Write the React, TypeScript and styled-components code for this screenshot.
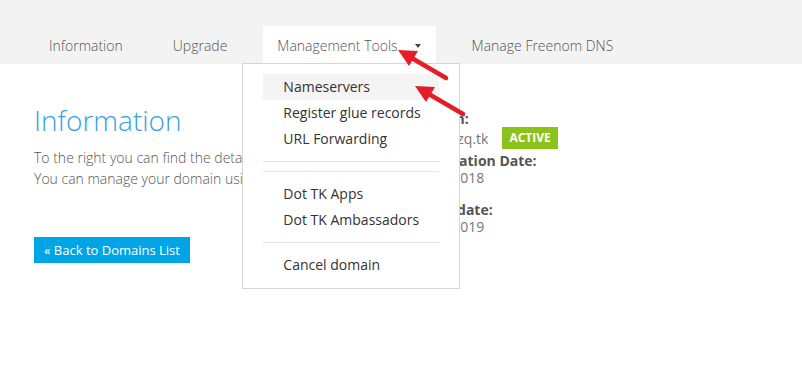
import React from "react";
import styled, { createGlobalStyle } from "styled-components";

const GlobalStyle = createGlobalStyle`
  body {
    margin: 0;
    padding: 0;
    background: #fff;
    font-family: "Open Sans", "Liberation Sans", sans-serif;
  }
`;

const Page = styled.div`
  position: relative;
  width: 802px;
  height: 374px;
  overflow: hidden;
`;

const NavBar = styled.div`
  height: 64px;
  background: #f3f3f3;
  display: flex;
  align-items: flex-end;
  gap: 22px;
  padding-left: 35px;
  box-sizing: border-box;
`;

const Tab = styled.div<{ $active?: boolean }>`
  position: relative;
  height: 38px;
  padding: 0 14px;
  display: flex;
  align-items: center;
  gap: 17px;
  font-size: 14px;
  font-weight: 300;
  color: #555;
  background: ${(p) => (p.$active ? "#fff" : "transparent")};
`;

const Caret = styled.span`
  width: 0;
  height: 0;
  border-left: 3.5px solid transparent;
  border-right: 3.5px solid transparent;
  border-top: 4px solid #444;
  margin: 2px 1px 0 0;
`;

const Dropdown = styled.div`
  position: absolute;
  top: 37px;
  left: -21px;
  width: 218px;
  box-sizing: border-box;
  background: #fff;
  border: 1px solid #d6d6d6;
  padding: 10px 20px;
  font-weight: 400;
  z-index: 2;
`;

const MenuItem = styled.div<{ $hover?: boolean }>`
  height: 26px;
  line-height: 26px;
  padding-left: 20px;
  font-size: 14px;
  color: #333;
  white-space: nowrap;
  background: ${(p) => (p.$hover ? "#f4f4f4" : "transparent")};
`;

const Divider = styled.div`
  height: 1px;
  margin: 9px 0;
  background: #e3e3e3;
`;

const Content = styled.div`
  display: grid;
  grid-template-columns: 376px 1fr;
  padding: 38px 0 0 34px;
`;

const Heading = styled.h1`
  margin: 0 0 9px;
  font-size: 28px;
  font-weight: 300;
  line-height: 36px;
  color: #3a9fdc;
`;

const Text = styled.p`
  margin: 0;
  font-size: 14px;
  line-height: 21px;
  font-weight: 300;
  color: #555;
  white-space: nowrap;
`;

const BackButton = styled.a`
  display: inline-block;
  margin-top: 48px;
  height: 26px;
  line-height: 26px;
  padding: 0 10px;
  background: #00a5e6;
  color: #fff;
  font-size: 13px;
  text-decoration: none;
`;

const Details = styled.div`
  padding-top: 8px;
`;

const Field = styled.div<{ $tight?: boolean }>`
  margin-bottom: ${(p) => (p.$tight ? "3px" : "15px")};
`;

const Label = styled.div`
  font-size: 14px;
  line-height: 17px;
  font-weight: 700;
  color: #555;
  white-space: nowrap;
`;

const Value = styled.div`
  display: flex;
  align-items: center;
  gap: 14px;
  min-height: 17px;
  font-size: 14px;
  line-height: 17px;
  color: #777;
  white-space: nowrap;
`;

const Badge = styled.span`
  height: 22px;
  line-height: 22px;
  padding: 0 7px;
  background: #8cc21c;
  color: #fff;
  font-size: 12px;
  font-weight: 700;
`;

const Arrows = styled.svg`
  position: absolute;
  left: 0;
  top: 0;
  pointer-events: none;
  z-index: 3;
`;

const Arrow = ({ dx, dy }: { dx: number; dy: number }) => (
  <g transform={`translate(${dx} ${dy})`}>
    <line x1="446" y1="78" x2="410" y2="57" stroke="#e41e26" strokeWidth="4.5" strokeLinecap="round" />
    <polygon points="398,50 418,51 409,66" fill="#e41e26" />
  </g>
);

export default function App() {
  return (
    <Page>
      <GlobalStyle />
      <NavBar>
        <Tab>Information</Tab>
        <Tab>Upgrade</Tab>
        <Tab $active>
          Management Tools
          <Caret />
          <Dropdown>
            <MenuItem $hover>Nameservers</MenuItem>
            <MenuItem>Register glue records</MenuItem>
            <MenuItem>URL Forwarding</MenuItem>
            <Divider />
            <Divider />
            <MenuItem>Dot TK Apps</MenuItem>
            <MenuItem>Dot TK Ambassadors</MenuItem>
            <Divider />
            <MenuItem>Cancel domain</MenuItem>
          </Dropdown>
        </Tab>
        <Tab>Manage Freenom DNS</Tab>
      </NavBar>
      <Content>
        <div>
          <Heading>Information</Heading>
          <Text>To the right you can find the details of your domain.</Text>
          <Text>You can manage your domain using the tabs above.</Text>
          <BackButton href="#">« Back to Domains List</BackButton>
        </div>
        <Details>
          <Field $tight>
            <Label>Domain:</Label>
            <Value>
              mywebzq.tk
              <Badge>ACTIVE</Badge>
            </Value>
          </Field>
          <Field>
            <Label>Registration Date:</Label>
            <Value>12/03/2018</Value>
          </Field>
          <Field>
            <Label>Expiry date:</Label>
            <Value>12/03/2019</Value>
          </Field>
        </Details>
      </Content>
      <Arrows width="802" height="374">
        <Arrow dx={0} dy={0} />
        <Arrow dx={17} dy={36} />
      </Arrows>
    </Page>
  );
}
